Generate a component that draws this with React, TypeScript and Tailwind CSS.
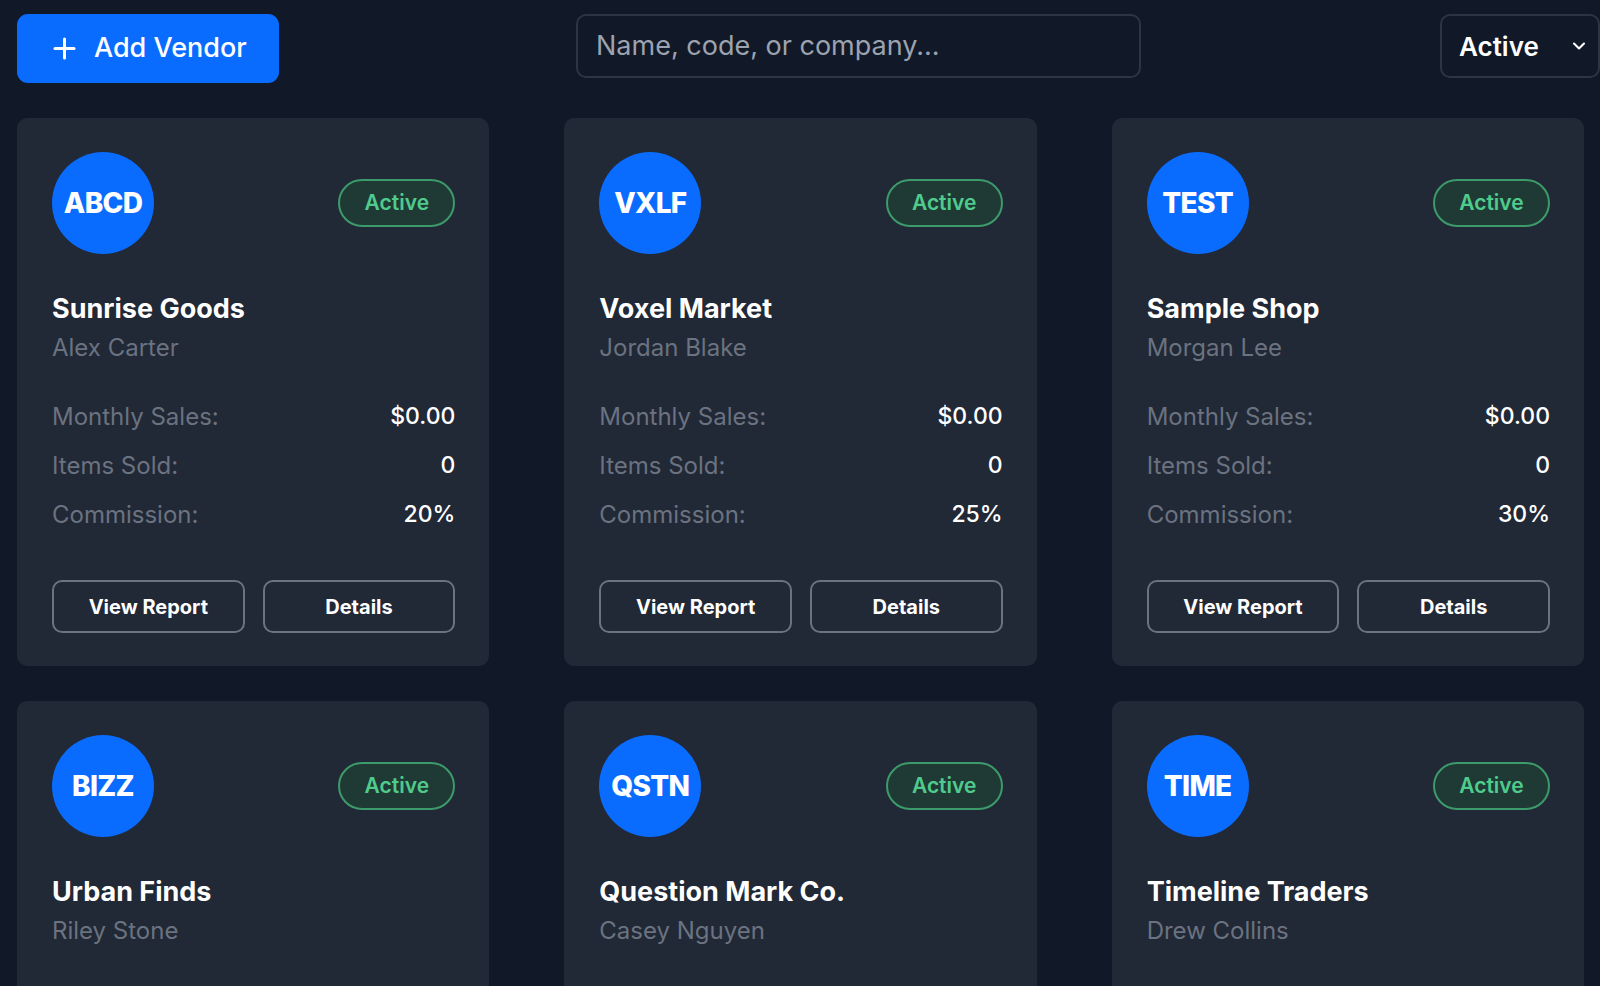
import { ChevronDown } from "lucide-react";

type Vendor = {
  code: string;
  name: string;
  contact: string;
  sales: string;
  items: number;
  commission: string;
};

const vendors: Vendor[] = [
  { code: "ABCD", name: "Sunrise Goods", contact: "Alex Carter", sales: "$0.00", items: 0, commission: "20%" },
  { code: "VXLF", name: "Voxel Market", contact: "Jordan Blake", sales: "$0.00", items: 0, commission: "25%" },
  { code: "TEST", name: "Sample Shop", contact: "Morgan Lee", sales: "$0.00", items: 0, commission: "30%" },
  { code: "BIZZ", name: "Urban Finds", contact: "Riley Stone", sales: "$0.00", items: 0, commission: "15%" },
  { code: "QSTN", name: "Question Mark Co.", contact: "Casey Nguyen", sales: "$0.00", items: 0, commission: "20%" },
  { code: "TIME", name: "Timeline Traders", contact: "Drew Collins", sales: "$0.00", items: 0, commission: "25%" },
];

function StatRow({ label, value }: { label: string; value: string | number }) {
  return (
    <div className="flex h-[49px] items-center justify-between">
      <span className="text-[24px] text-[#6b7280]">{label}</span>
      <span className="text-[23px] font-medium text-white">{value}</span>
    </div>
  );
}

function VendorCard({ vendor }: { vendor: Vendor }) {
  return (
    <div className="rounded-[10px] bg-[#212836] pt-[34px] pr-[34px] pb-[33px] pl-[35px]">
      <div className="flex items-center justify-between">
        <div className="flex h-[102px] w-[102px] items-center justify-center rounded-full bg-[#0a6cff] text-[28px] font-extrabold tracking-tight text-white">
          {vendor.code}
        </div>
        <span className="flex h-[48px] w-[117px] items-center justify-center rounded-full border-2 border-[#3d9a6b] bg-[#1f3a35] text-[21px] font-semibold text-[#4fcb8d]">
          Active
        </span>
      </div>

      <h3 className="mt-[37px] text-[27px] font-bold leading-[36px] text-white">{vendor.name}</h3>
      <p className="mt-[5px] text-[24px] leading-[32px] text-[#6b7280]">{vendor.contact}</p>

      <div className="mt-[28px]">
        <StatRow label="Monthly Sales:" value={vendor.sales} />
        <StatRow label="Items Sold:" value={vendor.items} />
        <StatRow label="Commission:" value={vendor.commission} />
      </div>

      <div className="mt-[41px] grid grid-cols-2 gap-[18px]">
        <button className="h-[53px] rounded-[10px] border-2 border-[#6b7280] text-[20px] font-bold text-white">
          View Report
        </button>
        <button className="h-[53px] rounded-[10px] border-2 border-[#6b7280] text-[20px] font-bold text-white">
          Details
        </button>
      </div>
    </div>
  );
}

export default function App() {
  return (
    <div
      className="h-[986px] w-[1600px] overflow-hidden bg-[#111827]"
      style={{ fontFamily: "Inter, 'Liberation Sans', sans-serif" }}
    >
      <div className="flex items-start pt-[14px] pl-[17px]">
        <button className="flex h-[69px] w-[262px] items-center gap-[18px] rounded-[11px] bg-[#0a6cff] pl-[36px] text-[27px] font-medium text-white">
          <svg width="23" height="23" viewBox="0 0 23 23" fill="none" stroke="currentColor" strokeWidth="3" strokeLinecap="round">
            <line x1="11.5" y1="2" x2="11.5" y2="21" />
            <line x1="2" y1="11.5" x2="21" y2="11.5" />
          </svg>
          Add Vendor
        </button>

        <div className="ml-[297px] flex h-[64px] w-[565px] items-center rounded-[10px] border-2 border-[#2d3544] px-[18px]">
          <input
            className="w-full bg-transparent text-[27px] text-white outline-none placeholder:text-[#9ca3af]"
            placeholder="Name, code, or company..."
          />
        </div>

        <div className="ml-[299px] flex h-[64px] w-[160px] items-center justify-between rounded-[10px] border-2 border-[#2d3544] pr-[9px] pl-[17px]">
          <span className="text-[26px] font-semibold text-white">Active</span>
          <ChevronDown size={20} strokeWidth={2.5} className="text-white" />
        </div>
      </div>

      <div className="mt-[35px] grid w-[1584px] grid-cols-3 gap-x-[75px] gap-y-[35px] pl-[17px]">
        {vendors.map((v) => (
          <VendorCard key={v.code} vendor={v} />
        ))}
      </div>
    </div>
  );
}
